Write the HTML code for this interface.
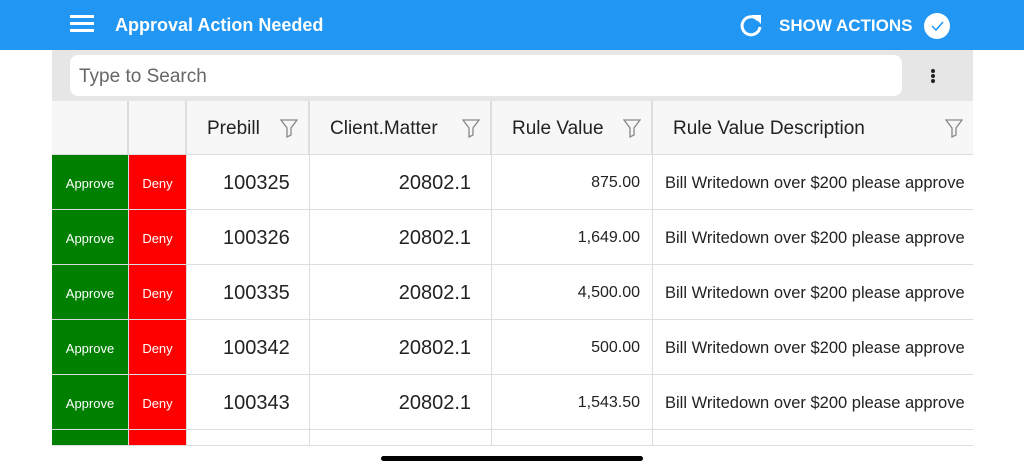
<!DOCTYPE html><html><head><style>
*{margin:0;padding:0;box-sizing:border-box}
body{width:1024px;height:471px;background:#fff;font-family:"Liberation Sans",sans-serif;position:relative;overflow:hidden}
.a{position:absolute}
.hdr{left:0;top:0;width:1024px;height:50px;background:#2196F3}
.cell{position:absolute;display:flex;align-items:center;border-right:1px solid #ddd;border-bottom:1px solid #ddd;color:#222;padding-top:2px}
.th{background:#f7f7f7;font-size:19px;top:101px;height:54px}
.ap{background:#008000;color:#fff;font-size:13px;justify-content:center;border-color:#ddd}
.dn{background:#f00;color:#fff;font-size:13px;justify-content:center;border-color:#ddd}
.num{font-size:20px}
.f{position:absolute;right:10px;top:17px}
</style></head><body>
<div class="a hdr"></div>
<div class="a" style="left:70px;top:15px;width:24px;height:3px;background:#fff;box-shadow:0 7px 0 #fff,0 14px 0 #fff"></div>
<div class="a" style="left:115px;top:15px;color:#fff;font-size:18px;font-weight:bold">Approval Action Needed</div>
<svg class="a" style="left:738px;top:12px" width="26" height="26" viewBox="0 0 26 26"><path d="M20 8A9 9 0 1 0 22 15" fill="none" stroke="#fff" stroke-width="3"/><path d="M14 3h9v9z" fill="#fff"/></svg>
<div class="a" style="left:779px;top:16px;color:#fff;font-size:17px;font-weight:bold">SHOW ACTIONS</div>
<div class="a" style="left:924px;top:13px;width:26px;height:26px;border-radius:50%;background:#fff"></div>
<svg class="a" style="left:924px;top:13px" width="26" height="26"><path d="M8 13l4 4 7-8" fill="none" stroke="#2196F3" stroke-width="1.5"/></svg>
<div class="a" style="left:52px;top:50px;width:921px;height:51px;background:#e6e6e6"></div>
<div class="a" style="left:70px;top:55px;width:832px;height:41px;background:#fff;border-radius:8px;font-size:19px;color:#666;padding:11px 0 0 9px">Type to Search</div>
<div class="a" style="left:931px;top:69px;width:4px;height:4px;border-radius:50%;background:#222;box-shadow:0 5px 0 #222,0 10px 0 #222"></div>
<div id="g"></div>
<div class="a" style="left:381px;top:456px;width:262px;height:5px;border-radius:3px;background:#000"></div>
<script>
var cols=[[52,77],[129,58],[187,123],[310,182],[492,161],[653,320]];
var h='';var heads=['','','Prebill','Client.Matter','Rule Value','Rule Value Description'];
var fil='<svg class="f" width="18" height="20" viewBox="0 0 18 20"><path d="M1 2h16l-6 8v7l-4 2v-9z" fill="none" stroke="#888" stroke-width="1.3"/></svg>';
for(var i=0;i<6;i++){h+='<div class="cell th" style="left:'+cols[i][0]+'px;width:'+cols[i][1]+'px;padding-left:20px;border-right:'+(i==5?'none':'2px solid #ddd')+'">'+heads[i]+(i>1?fil:'')+'</div>';}
var d=[['100325','875.00'],['100326','1,649.00'],['100335','4,500.00'],['100342','500.00'],['100343','1,543.50'],['','']];
for(var r=0;r<6;r++){var t=155+r*55,hh=r==5?16:55;
h+='<div class="cell ap" style="left:52px;top:'+t+'px;width:77px;height:'+hh+'px">'+(r<5?'Approve':'')+'</div>';
h+='<div class="cell dn" style="left:129px;top:'+t+'px;width:58px;height:'+hh+'px">'+(r<5?'Deny':'')+'</div>';
h+='<div class="cell num" style="left:187px;top:'+t+'px;width:123px;height:'+hh+'px;padding-left:36px">'+d[r][0]+'</div>';
h+='<div class="cell num" style="left:310px;top:'+t+'px;width:182px;height:'+hh+'px;justify-content:flex-end;padding-right:20px">'+(r<5?'20802.1':'')+'</div>';
h+='<div class="cell" style="left:492px;top:'+t+'px;width:161px;height:'+hh+'px;justify-content:flex-end;padding-right:12px;font-size:16px">'+d[r][1]+'</div>';
h+='<div class="cell" style="left:653px;top:'+t+'px;width:320px;height:'+hh+'px;padding-left:12px;font-size:16.5px;border-right:none;white-space:nowrap">'+(r<5?'Bill Writedown over $200 please approve':'')+'</div>';}
document.getElementById('g').innerHTML=h;
</script>
</body></html>
